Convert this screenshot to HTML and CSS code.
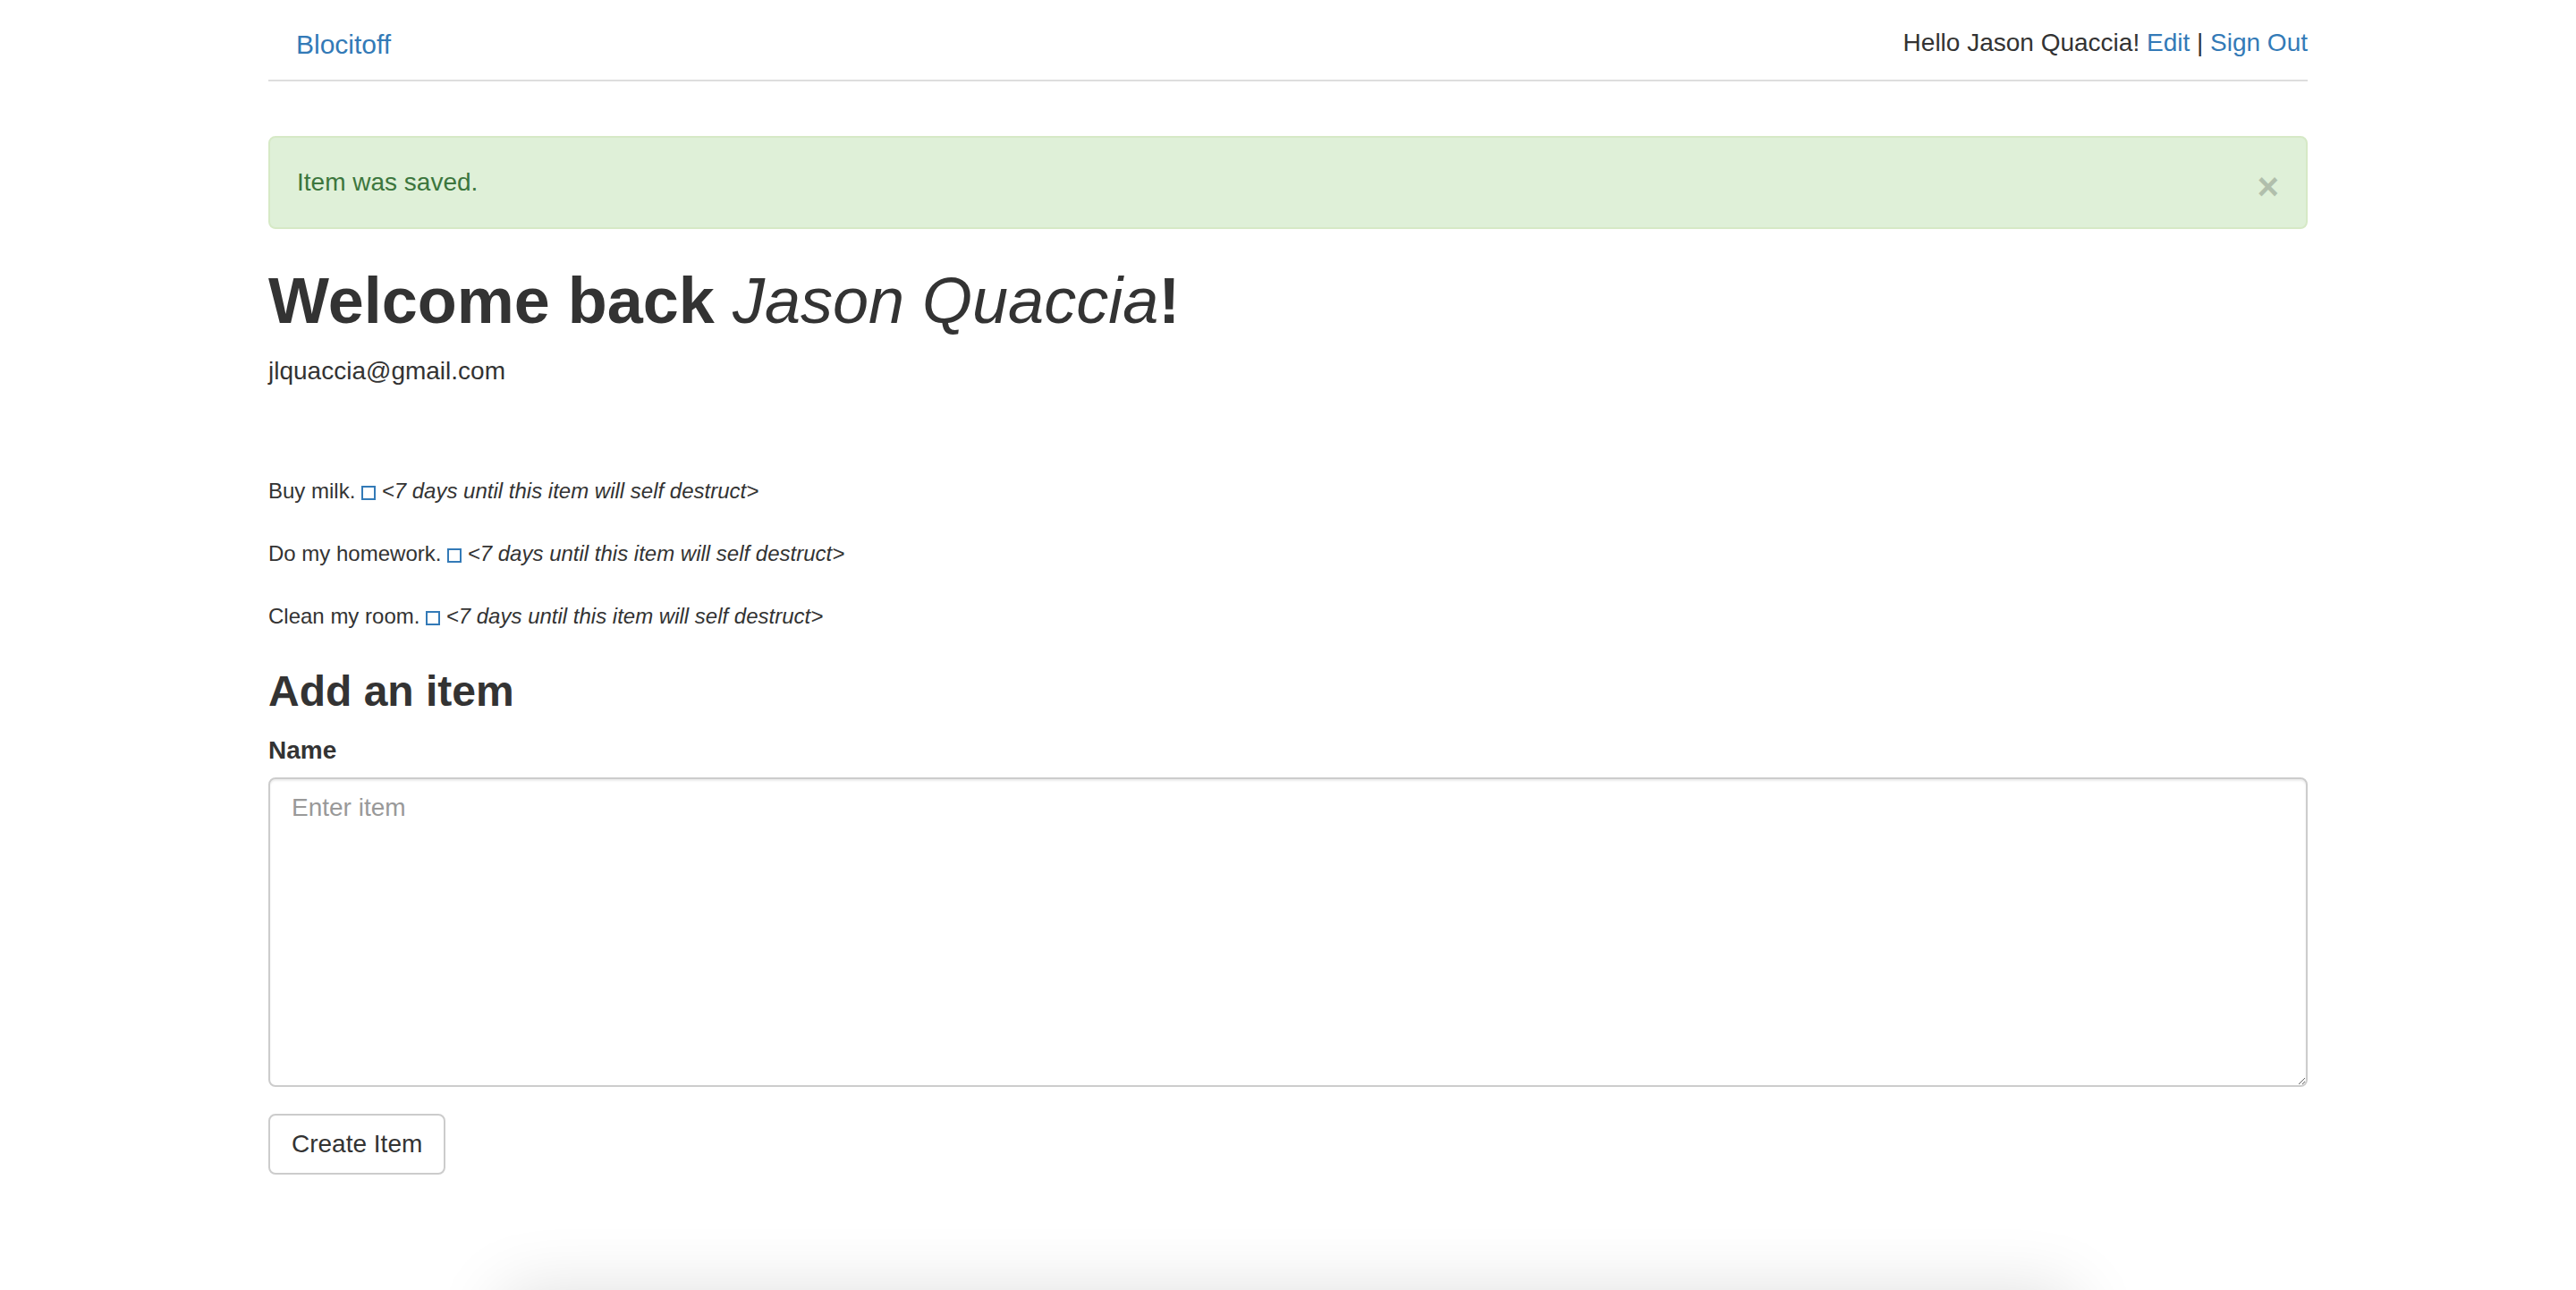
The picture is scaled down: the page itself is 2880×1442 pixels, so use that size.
FILE: index.html
```html
<!DOCTYPE html>
<html lang="en">
<head>
<meta charset="utf-8">
<title>Blocitoff</title>
<link rel="stylesheet" href="styles.css">
</head>
<body>
<div class="container">
  <nav class="topnav">
    <a class="brand" href="#">Blocitoff</a>
    <div class="user-links">Hello Jason Quaccia! <a href="#">Edit</a> | <a href="#">Sign Out</a></div>
  </nav>

  <div class="alert">
    <span class="alert-text">Item was saved.</span>
    <button class="close" type="button">&times;</button>
  </div>

  <h1 class="welcome">Welcome back <em class="name">Jason Quaccia</em>!</h1>
  <p class="email">jlquaccia@gmail.com</p>

  <div class="items">
    <p class="item">Buy milk. <a class="check" href="#"><span class="box"></span></a> <em>&lt;7 days until this item will self destruct&gt;</em></p>
    <p class="item">Do my homework. <a class="check" href="#"><span class="box"></span></a> <em>&lt;7 days until this item will self destruct&gt;</em></p>
    <p class="item">Clean my room. <a class="check" href="#"><span class="box"></span></a> <em>&lt;7 days until this item will self destruct&gt;</em></p>
  </div>

  <h3 class="add-title">Add an item</h3>
  <form class="item-form">
    <div class="form-group">
      <label class="form-label" for="item_name">Name</label>
      <textarea class="form-control" id="item_name" placeholder="Enter item"></textarea>
    </div>
    <button class="btn" type="button">Create Item</button>
  </form>
</div>
<div class="fold-shadow"></div>
</body>
</html>
```

FILE: styles.css
```css
html {
  overflow: hidden;
}

body {
  margin: 0;
  background: #fff;
  color: #333;
  font-family: "Liberation Sans", Helvetica, Arial, sans-serif;
  font-size: 28px;
  line-height: 40px;
}

a {
  color: #337ab7;
  text-decoration: none;
}

.container {
  width: 2280px;
  margin: 0 auto;
}

.topnav {
  display: flex;
  justify-content: space-between;
  align-items: flex-start;
  height: 89px;
  border-bottom: 2px solid #ddd;
}

.brand {
  font-size: 30px;
  line-height: 40px;
  padding-top: 30px;
  padding-left: 31px;
}

.user-links {
  padding-top: 28px;
  line-height: 40px;
}

.alert {
  display: flex;
  justify-content: space-between;
  align-items: flex-start;
  height: 40px;
  margin-top: 61px;
  padding: 30px;
  border: 2px solid #d6e9c6;
  border-radius: 8px;
  background: #dff0d8;
  color: #3c763d;
}

.alert-text {
  line-height: 40px;
}

.close {
  margin: 5px 0 -5px 0;
  padding: 0;
  border: 0;
  background: transparent;
  font-family: "Liberation Sans", Helvetica, Arial, sans-serif;
  font-size: 42px;
  font-weight: bold;
  line-height: 40px;
  color: #000;
  opacity: 0.2;
  cursor: pointer;
}

.welcome {
  margin: 41px 0 19px;
  font-size: 72px;
  line-height: 79px;
  font-weight: bold;
}

.welcome .name {
  font-weight: normal;
}

.email {
  margin: 0;
}

.items {
  margin-top: 94px;
}

.item {
  margin: 0 0 30px;
  font-size: 24px;
  line-height: 40px;
}

.item em {
  font-style: italic;
}

.check {
  display: inline-block;
  vertical-align: baseline;
}

.box {
  display: inline-block;
  width: 12px;
  height: 12px;
  border: 2px solid #337ab7;
  vertical-align: -2px;
}

.add-title {
  margin: 37px 0 20px;
  font-size: 48px;
  line-height: 53px;
  font-weight: bold;
}

.item-form {
  margin: 0;
}

.form-group {
  margin-bottom: 30px;
}

.form-label {
  display: block;
  margin-bottom: 10px;
  font-weight: bold;
}

.form-control {
  display: block;
  box-sizing: border-box;
  width: 100%;
  height: 346px;
  margin: 0;
  padding: 12px 24px;
  border: 2px solid #ccc;
  border-radius: 8px;
  box-shadow: inset 0 2px 2px rgba(0, 0, 0, 0.075);
  font-family: "Liberation Sans", Helvetica, Arial, sans-serif;
  font-size: 28px;
  line-height: 40px;
  color: #555;
  resize: vertical;
}

.form-control::placeholder {
  color: #999;
}

.btn {
  display: inline-block;
  margin: 0;
  padding: 12px 24px;
  border: 2px solid #ccc;
  border-radius: 8px;
  background: #fff;
  color: #333;
  font-family: "Liberation Sans", Helvetica, Arial, sans-serif;
  font-size: 28px;
  line-height: 40px;
  cursor: pointer;
}

.fold-shadow {
  width: 1754px;
  height: 100px;
  margin: 133px auto 0;
  background: #fff;
  box-shadow: 0 0 80px rgba(0, 0, 0, 0.14);
}
```
